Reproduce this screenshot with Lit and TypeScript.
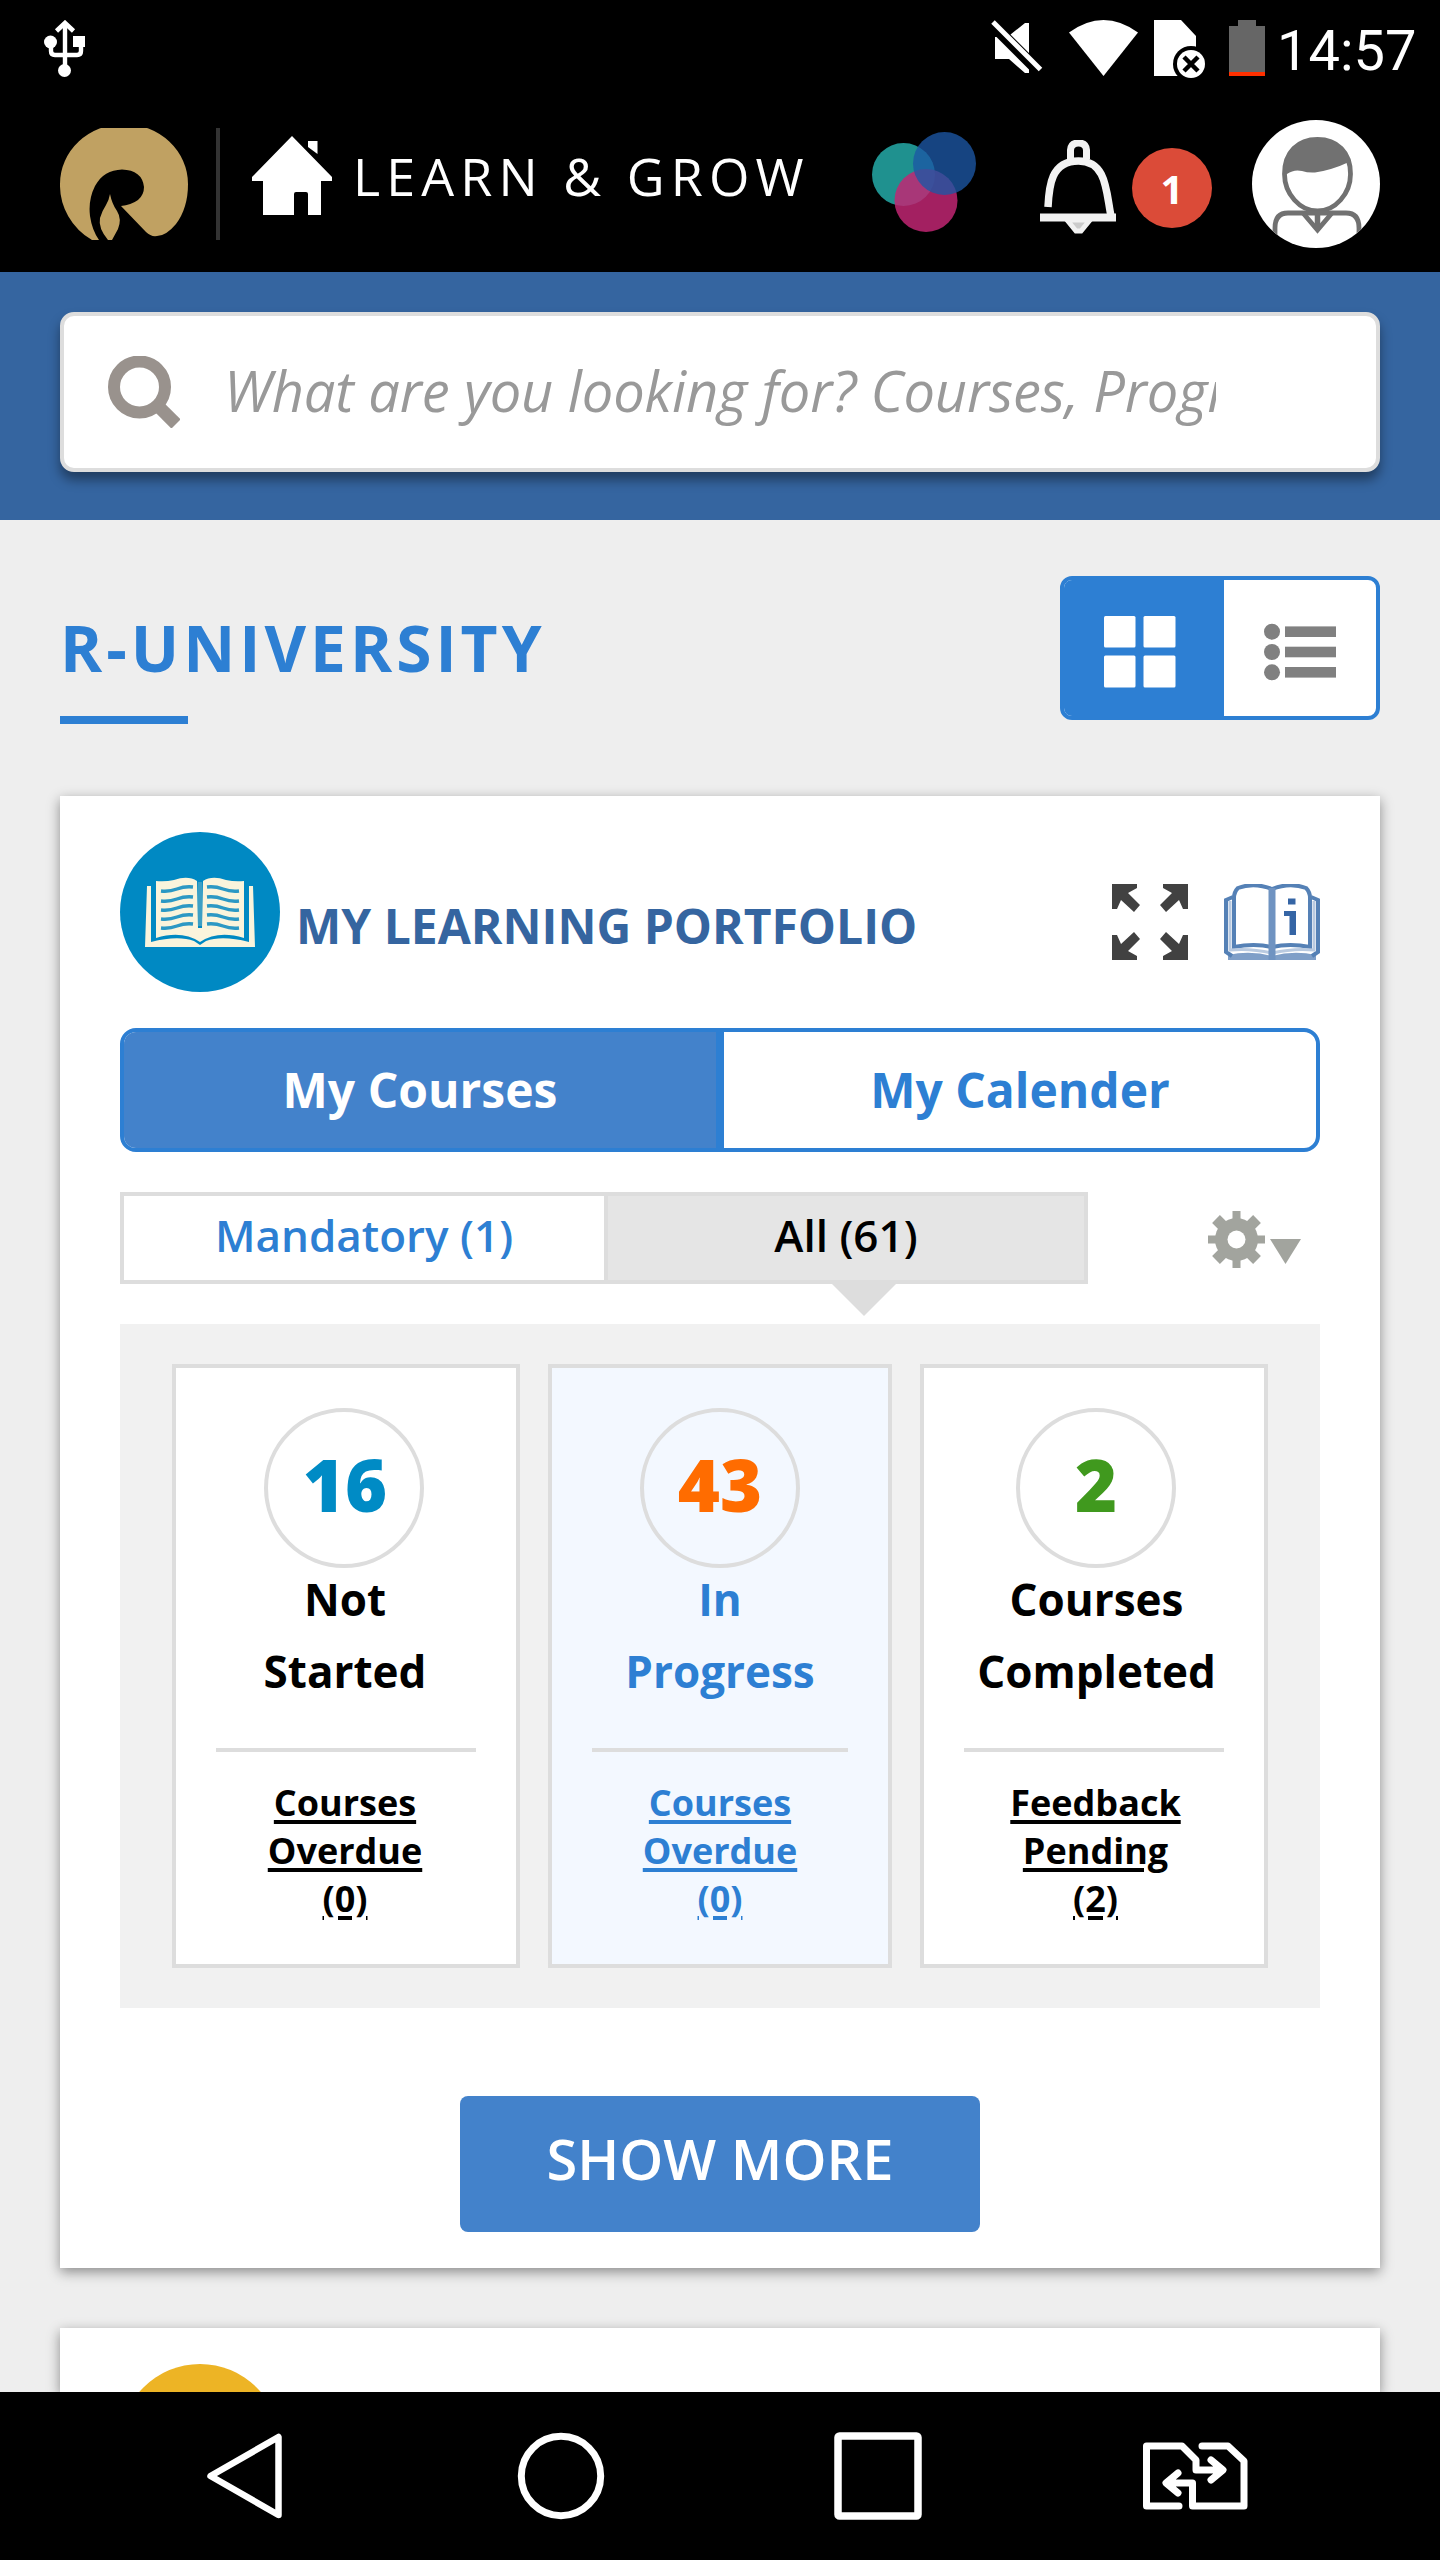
import { LitElement, html, css, svg } from "lit";
import { customElement, property } from "lit/decorators.js";

const usbIcon = svg`<svg class="ic" width="42" height="58" viewBox="0 0 42 58">
  <path d="M21 6V48M7 24V31Q7 35 11 35H33Q37 35 37 31V24" fill="none" stroke="#fff" stroke-width="4.4"/>
  <path d="M12.5 11L21 3L29.500 11" fill="none" stroke="#fff" stroke-width="4.600"/>
  <circle cx="6.500" cy="22" r="6.500" fill="#fff"/><rect x="29" y="16" width="12" height="11" fill="#fff"/>
  <circle cx="20.500" cy="50.500" r="6.500" fill="#fff"/></svg>`;

const muteIcon = svg`<svg class="ic" width="52" height="54" viewBox="0 0 52 54">
  <path d="M4 17V39H18L34 53H38V49.500L5.500 17ZM19.500 14.500L34 3H38V33Z" fill="#fff"/>
  <path d="M2 2L49.500 49.500" stroke="#fff" stroke-width="5"/></svg>`;

const wifiIcon = svg`<svg class="ic" width="69" height="56" viewBox="0 0 69 56">
  <path d="M0 12.500Q34.500 -12.500 69 12.500L34.500 56Z" fill="#fff"/></svg>`;

const simIcon = svg`<svg class="ic" width="52" height="58" viewBox="0 0 52 58">
  <path d="M0 0H27L42 16V56H0Z" fill="#fff"/><circle cx="37" cy="44" r="18" fill="#000"/>
  <circle cx="37" cy="44" r="14" fill="#fff"/>
  <path d="M30 37L44 51M44 37L30 51" stroke="#000" stroke-width="4.500"/></svg>`;

const batteryIcon = svg`<svg class="ic" width="36" height="56" viewBox="0 0 36 56">
  <path d="M9 0H27V6H36V52H0V6H9Z" fill="#666"/><rect y="52" width="36" height="4" fill="#ff3000"/></svg>`;

const logo = svg`<svg class="ic" width="128" height="112" viewBox="0 0 128 112" fill="#c0a162">
  <path d="M32 112A66 64 0 0 1 0 56A64 60 0 0 1 128 56Q128 80 116 96Q106 108 97 108Q91 109 86 104L61 78Q71 77 78 72Q84 67 84 59Q82 42 62 41.500C50 42 41 47 35 58Q28 72 30 88Q32 102 39 112Z"/>
  <path d="M50 66Q52 76 57 83Q62 91 58 101L52 112H48Q38 100 40 90Q42 83 46 77Q49 72 50 66Z"/></svg>`;

const homeIcon = svg`<svg class="ic" width="80" height="80" viewBox="0 0 80 80" fill="#fff">
  <path d="M40 0L80 41V45H69V79H56V58Q56 56 54 56H44Q42 56 42 58V79H11V45H0V41Z"/>
  <path d="M56 5H65.500V18L56 11Z"/></svg>`;

const circlesIcon = svg`<svg class="ic" width="104" height="100" viewBox="0 0 104 100">
  <circle cx="31.500" cy="42.500" r="31.500" fill="#1f918f"/>
  <circle cx="54" cy="68.500" r="31.500" fill="#c22673" fill-opacity=".84"/>
  <circle cx="72.500" cy="31.500" r="31.500" fill="#1c57a5" fill-opacity=".78"/></svg>`;

const bellIcon = svg`<svg class="ic" width="76" height="96" viewBox="0 0 76 96" fill="none" stroke="#f2f2f2" stroke-width="7.500">
  <path d="M30.500 19V10Q31 3 38.500 3Q46 3 46.500 10V19" stroke-width="7"/>
  <path d="M8 67C9 46 11 21 38.500 21C67 21 66 52 71 76"/>
  <path d="M0 77.500H76" stroke-width="8"/><path d="M27 80L36 91H41L50 80Z" fill="#ccc" stroke-width="5"/></svg>`;

const avatarIcon = svg`<svg class="ic" width="128" height="128" viewBox="0 0 128 128">
  <defs><clipPath id="round"><circle cx="64" cy="64" r="64"/></clipPath></defs>
  <circle cx="64" cy="64" r="64" fill="#fff"/>
  <g clip-path="url(#round)" fill="none" stroke="#717171" stroke-width="4.800">
    <path d="M32.500 54C32.500 32 46 19.500 65.500 19.500S98.500 32 98.500 54C98.500 74 83 91 65.500 91S32.500 74 32.500 54Z"/>
    <path d="M32.500 54Q31 36 41 27Q51 19 65.500 19.500Q84 20 92 31Q97 38 97 42Q80 50 63 52.500Q56 53 50 51Q42 49 35 54Z" fill="#717171" stroke="none"/>
    <path d="M23 118V108Q23 93 36 93H94Q107 93 107 108V118"/>
    <path d="M51 93L65.500 110L80 93"/><path d="M65.500 94V109" stroke-width="5.500"/></g></svg>`;

const searchIcon = svg`<svg class="ic" width="72" height="72" viewBox="0 0 72 72" fill="none" stroke="#99928d">
  <circle cx="31.500" cy="31" r="25.500" stroke-width="12"/><path d="M49 49L68 68" stroke-width="13"/></svg>`;

const gridIcon = svg`<svg class="ic" width="72" height="72" viewBox="0 0 72 72" fill="#fff">
  <rect width="31.500" height="31.500" rx="1.500"/><rect x="39.500" width="32" height="31.500" rx="1.500"/>
  <rect y="39.500" width="31.500" height="32" rx="1.500"/><rect x="39.500" y="39.500" width="32" height="32" rx="1.500"/></svg>`;

const listIcon = svg`<svg class="ic" width="72" height="72" viewBox="0 0 72 72" fill="#808080">
  ${[15.7, 36, 56.3].map((y) => svg`<circle cx="8" cy=${y} r="8"/><rect x="21" y=${y - 5.3} width="51" height="10.600"/>`)}</svg>`;

const openBookIcon = svg`<svg class="ic" width="160" height="160" viewBox="0 0 160 160">
  <circle cx="80" cy="80" r="80" fill="#0089c3"/>
  <g fill="#faf4dc"><path d="M27 54H31V110Q58 103 74 109L80 113L86 109Q102 103 129 110V54H133L135 115H25Z"/>
  <path d="M36 49Q45 50 54 48Q68 43 77 49L78 96H82L83 49Q92 43 106 48Q115 50 124 49V106Q98 98 80 110Q62 98 36 106Z"/></g>
  ${[57, 67, 76, 85, 94].map((y) => svg`<path d="M41 ${y + 2}Q49 ${y + 3} 57 ${y}T73 ${y - 2}M87 ${y - 2}Q95 ${y - 3} 103 ${y}T119 ${y + 2}" fill="none" stroke="#2b98c4" stroke-width="3.400"/>`)}
  <path d="M80 50V94" stroke="#3d9fc4" stroke-width="4"/></svg>`;

const corner = "M0 0H25V4L16 9L28 21L22 28L9 16L5 25H0Z";
const expandIcon = svg`<svg class="ic" width="76" height="76" viewBox="0 0 76 76" fill="#414141">
  <path d=${corner}/><path d=${corner} transform="matrix(-1 0 0 1 76 0)"/>
  <path d=${corner} transform="matrix(1 0 0 -1 0 76)"/><path d=${corner} transform="matrix(-1 0 0 -1 76 76)"/></svg>`;

const infoBookIcon = svg`<svg class="ic" width="96" height="76" viewBox="0 0 96 76" fill="none" stroke="#5581b6" stroke-width="4">
  <path d="M4 71Q26 66 48 72Q70 66 92 71V76H4Z" fill="#7f9fc8" stroke="none"/>
  <path d="M9 13L2 16V68L8 72M87 13L94 16V68L88 72"/>
  <path d="M48 5Q30 -2 14 4Q10 8 10 14V63Q30 59 48 63Q66 59 86 63V14Q86 8 82 4Q66 -2 48 5Z"/>
  <path d="M6 17V66Q26 64 48 69Q70 64 90 66V17" stroke="#b9cae0" stroke-width="3"/>
  <path d="M48 4V76" stroke="#6f93c1" stroke-width="7"/>
  <path d="M64 17.500H71.500" stroke="#3565a5" stroke-width="6"/><path d="M60 29.500H68V51" stroke="#3565a5" stroke-width="5"/><path d="M69 27V51" stroke="#3565a5" stroke-width="6"/></svg>`;

const gearIcon = svg`<svg class="ic" width="93" height="57" viewBox="0 0 93 57">
  ${[0, 45, 90, 135].map((a) => svg`<rect x=${a % 90 ? 23 : 24.5} y=${a % 90 ? -0.5 : 0} width=${a % 90 ? 11 : 8} height=${a % 90 ? 58 : 57} fill="#a2a49e" transform="rotate(${a} 28.500 28.500)"/>`)}
  <circle cx="28.500" cy="28.500" r="21.500" fill="#a2a49e"/><circle cx="28.500" cy="28.500" r="9" fill="#fff"/>
  <path d="M62 28H93L77.500 53Z" fill="#a2a49e"/></svg>`;

const backIcon = svg`<svg class="ic" width="78" height="88" viewBox="0 0 78 88">
  <path d="M73.500 5V83L5.500 44Z" fill="none" stroke="#fff" stroke-width="6.500" stroke-linejoin="round"/></svg>`;
const circleIcon = svg`<svg class="ic" width="88" height="88" viewBox="0 0 88 88">
  <circle cx="44" cy="44" r="39.700" fill="none" stroke="#fff" stroke-width="7"/></svg>`;
const squareIcon = svg`<svg class="ic" width="88" height="88" viewBox="0 0 88 88">
  <rect x="4" y="4" width="80" height="80" rx="1.500" fill="none" stroke="#fff" stroke-width="7.500"/></svg>`;
const swapIcon = svg`<svg class="ic" width="106" height="68" viewBox="0 0 106 68" fill="none" stroke="#fff" stroke-width="7" stroke-linejoin="round" stroke-linecap="round">
  <path d="M37 64H4.500V4H40L54 18V28H80M69 18L81 28L69 38"/>
  <path d="M60 4H86L102 19V64H50.500V41H26M36 31L24 41L36 51"/></svg>`;

@customElement("stat-card")
class StatCard extends LitElement {
  @property() count = "";
  @property() labels = "";
  @property() links = "";
  @property() tint = "";
  @property({ type: Number }) inset = 48;

  static styles = css`
    :host { display: block; box-sizing: border-box; border: 4px solid #ddd; background: #fff; padding: 40px; color: #000; text-align: center; }
    :host([active]) { background: #f3f8ff; color: #2d7fd3; }
    .ring { box-sizing: border-box; width: 160px; height: 160px; border: 4px solid #ddd; border-radius: 50%; font-weight: 800; font-size: 72px; line-height: 144px; }
    .label { margin: -5px -20px 0; font-weight: 700; font-size: 44px; line-height: 72px; }
    .rule { height: 4px; background: #ddd; margin: 41px 0 27px; }
    .links { margin: 0 -20px; }
    .link { font-weight: 700; font-size: 36px; line-height: 48px; text-decoration: underline; text-decoration-thickness: 4px; text-underline-offset: 4px; }
    :host([lean="left"]) .label, :host([lean="left"]) .links { padding-right: 2px; }
    :host([lean="left"]) .ring { text-indent: 2px; }
    :host([lean="right"]) .label { padding-left: 5px; }
    :host([lean="right"]) .links { padding-left: 3px; }
  `;

  render() {
    return html`
      <div class="ring" style="margin-left:${this.inset}px;color:${this.tint}">${this.count}</div>
      <div class="label">${this.labels.split("|").map((t) => html`<div>${t}</div>`)}</div>
      <div class="rule"></div>
      <div class="links">${this.links.split("|").map((t) => html`<div class="link">${t}</div>`)}</div>
    `;
  }
}

@customElement("app-root")
class AppRoot extends LitElement {
  static styles = css`
    :host { display: flex; flex-direction: column; width: 1440px; height: 2560px; overflow: hidden; background: #eee; font-family: "Open Sans", sans-serif; color: #000; }
    * { box-sizing: border-box; }
    .ic { display: block; flex: none; }
    .top { flex: none; height: 272px; background: #000; color: #fff; }
    .status { display: flex; align-items: flex-start; height: 120px; padding: 20px 20px 0 44px; }
    .mute { margin-left: 905px; }
    .wifi { margin-left: 26px; }
    .sim { margin-left: 16px; }
    .battery { margin-left: 23px; }
    .time { margin-left: 12px; font: 400 56px/62px Roboto, sans-serif; white-space: nowrap; }
    .header { display: flex; align-items: flex-start; padding-left: 60px; height: 128px; }
    .logo { margin-top: 8px; }
    .sep { width: 4px; height: 112px; margin: 8px 0 0 28px; background: #333; }
    .home { margin: 16px 0 0 32px; }
    .brand { margin: 20px 0 0 21px; width: 519px; font-size: 52px; line-height: 72px; letter-spacing: 6.100px; white-space: nowrap; }
    .rings { margin-top: 12px; }
    .bell { margin: 20px 0 0 64px; }
    .badge { width: 80px; height: 80px; margin: 28px 0 0 16px; border-radius: 50%; background: #db4b38; font-weight: 700; font-size: 40px; line-height: 81px; text-align: center; }
    .avatar { margin-left: 40px; }
    .searchbar { flex: none; height: 248px; padding: 40px 60px 0; background: #3565a0; }
    .search { display: flex; align-items: center; height: 160px; padding-left: 44px; border: 4px solid #ddd; border-radius: 14px; background: #fff; box-shadow: 0 8px 12px rgba(0, 0, 0, .4); }
    .query { width: 992px; margin: -4px 0 0 44px; overflow: hidden; white-space: nowrap; font-style: italic; font-size: 56px; letter-spacing: -.100px; line-height: 90px; color: #999; }
    .heading { flex: none; display: flex; justify-content: space-between; height: 276px; padding: 56px 60px 0; }
    .title { margin: 32px 0 0 0; font-size: 64px; font-weight: 700; line-height: 80px; letter-spacing: 4px; color: #2d7fd3; }
    .bar { width: 128px; height: 8px; margin-top: 28px; background: #2d7fd3; }
    .toggle { display: flex; width: 320px; height: 144px; border: 4px solid #2d7fd3; border-radius: 12px; background: #fff; overflow: hidden; }
    .on { width: 160px; padding: 36px 40px; background: #2d7fd3; }
    .off { padding: 36px 40px; }
    .card { flex: none; margin: 0 60px 60px; padding: 36px 60px 0; background: #fff; box-shadow: 0 4px 12px rgba(0, 0, 0, .42); }
    .first { height: 1472px; }
    .next { height: 64px; margin-bottom: 0; overflow: hidden; }
    .content { flex: none; height: 1872px; overflow: hidden; }
    .card-head { display: flex; height: 196px; }
    .card-title { width: 816px; margin: 58px 0 0 16px; font-size: 48px; font-weight: 700; line-height: 72px; color: #3565a0; white-space: nowrap; }
    .expand { margin-top: 52px; }
    .info { margin: 52px 0 0 36px; }
    .tabs { display: flex; height: 124px; border: 4px solid #2d7fd3; border-radius: 16px; overflow: hidden; font-weight: 700; font-size: 48px; line-height: 115px; text-align: center; color: #2d7fd3; }
    .tab { flex: 1; }
    .tab.sel { background: #4382cb; color: #fff; border-right: 8px solid #2d7fd3; flex: none; width: 600px; }
    .filters { display: flex; margin-top: 40px; height: 132px; }
    .filter { position: relative; width: 488px; height: 92px; border: 4px solid #ddd; font-weight: 600; font-size: 44px; line-height: 78px; text-align: center; color: #2d7fd3; }
    .filter.sel { width: 480px; border-left: 0; background: #e5e5e5; color: #000; }
    .arrow { position: absolute; left: 224px; top: 88px; border: 32px solid transparent; border-top-color: #ddd; border-bottom: 0; }
    .gear { margin: 19px 0 0 120px; }
    .stats { display: grid; grid-template-columns: 348px 344px 348px; column-gap: 28px; height: 684px; padding: 40px 52px; background: #f1f1f1; }
    .more { width: 520px; height: 136px; margin: 88px auto 0; border-radius: 8px; background: #4382cb; color: #fff; font-weight: 600; font-size: 56px; line-height: 125px; text-align: center; white-space: nowrap; }
    .yellow { width: 160px; height: 160px; border-radius: 50%; background: #edb425; }
    .nav { flex: none; display: flex; height: 168px; background: #000; padding: 40px 0 0 205px; }
    .nav-circle { margin-left: 234px; }
    .nav-square { margin-left: 229px; }
    .nav-swap { margin: 10px 0 0 220px; }
  `;

  render() {
    return html`
      <div class="top">
        <div class="status">
          ${usbIcon}<div class="mute">${muteIcon}</div><div class="wifi">${wifiIcon}</div>
          <div class="sim">${simIcon}</div><div class="battery">${batteryIcon}</div><div class="time">14:57</div>
        </div>
        <div class="header">
          <div class="logo">${logo}</div><div class="sep"></div><div class="home">${homeIcon}</div>
          <div class="brand">LEARN &amp; GROW</div>
          <div class="rings">${circlesIcon}</div><div class="bell">${bellIcon}</div>
          <div class="badge">1</div><div class="avatar">${avatarIcon}</div>
        </div>
      </div>
      <div class="searchbar">
        <div class="search">${searchIcon}<div class="query">What are you looking for? Courses, Programs</div></div>
      </div>
      <div class="content">
        <div class="heading">
          <div><div class="title">R-UNIVERSITY</div><div class="bar"></div></div>
          <div class="toggle"><div class="on">${gridIcon}</div><div class="off">${listIcon}</div></div>
        </div>
        <div class="card first">
          <div class="card-head">
            ${openBookIcon}<div class="card-title">MY LEARNING PORTFOLIO</div>
            <div class="expand">${expandIcon}</div><div class="info">${infoBookIcon}</div>
          </div>
          <div class="tabs"><div class="tab sel">My Courses</div><div class="tab">My Calender</div></div>
          <div class="filters">
            <div class="filter">Mandatory (1)</div>
            <div class="filter sel">All (61)<div class="arrow"></div></div>
            <div class="gear">${gearIcon}</div>
          </div>
          <div class="stats">
            <stat-card lean="left" count="16" labels="Not|Started" links="Courses|Overdue|(0)" tint="#008bc5"></stat-card>
            <stat-card active count="43" labels="In|Progress" links="Courses|Overdue|(0)" tint="#ff6c00"></stat-card>
            <stat-card lean="right" count="2" labels="Courses|Completed" links="Feedback|Pending|(2)" tint="#40991e" inset="52"></stat-card>
          </div>
          <div class="more">SHOW MORE</div>
        </div>
        <div class="card next"><div class="yellow"></div></div>
      </div>
      <div class="nav">
        ${backIcon}<div class="nav-circle">${circleIcon}</div>
        <div class="nav-square">${squareIcon}</div><div class="nav-swap">${swapIcon}</div>
      </div>
    `;
  }
}
